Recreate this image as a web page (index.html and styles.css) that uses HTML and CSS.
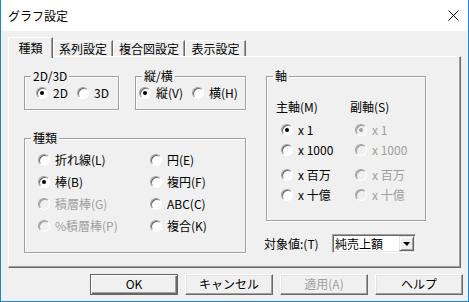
FILE: index.html
```html
<!DOCTYPE html>
<html lang="ja">
<head>
    <meta charset="UTF-8">
    <title>グラフ設定</title>
    <link rel="stylesheet" href="styles.css">
</head>
<body>
    <div class="window">
        <div class="titlebar">
            <span class="title">グラフ設定</span>
            <svg class="close" width="11" height="11" viewBox="0 0 11 11">
                <path d="M0.5 0.5 L10.5 10.5 M10.5 0.5 L0.5 10.5" stroke="#000" stroke-width="1" fill="none"/>
            </svg>
        </div>
        <div class="client">
            <div class="tabs">
                <div class="tab active">種類</div>
                <div class="tab t2">系列設定</div>
                <div class="tab t3">複合図設定</div>
                <div class="tab t4">表示設定</div>
            </div>
            <div class="panel">
                <div class="left">
                    <div class="row-top">
                        <div class="group g-dim">
                            <span class="group-title">2D/3D</span>
                            <div class="radio-row">
                                <label class="item"><span class="radio checked"></span>2D</label>
                                <label class="item"><span class="radio"></span>3D</label>
                            </div>
                        </div>
                        <div class="group g-dir">
                            <span class="group-title">縦/横</span>
                            <div class="radio-row">
                                <label class="item"><span class="radio checked"></span>縦(V)</label>
                                <label class="item"><span class="radio"></span>横(H)</label>
                            </div>
                        </div>
                    </div>
                    <div class="group g-kind">
                        <span class="group-title">種類</span>
                        <div class="kind-grid">
                            <label class="item"><span class="radio"></span>折れ線(L)</label>
                            <label class="item"><span class="radio"></span>円(E)</label>
                            <label class="item"><span class="radio checked"></span>棒(B)</label>
                            <label class="item"><span class="radio"></span>複円(F)</label>
                            <label class="item disabled"><span class="radio"></span>積層棒(G)</label>
                            <label class="item"><span class="radio"></span>ABC(C)</label>
                            <label class="item disabled"><span class="radio"></span>%積層棒(P)</label>
                            <label class="item"><span class="radio"></span>複合(K)</label>
                        </div>
                    </div>
                </div>
                <div class="right">
                    <div class="group g-axis">
                        <span class="group-title">軸</span>
                        <div class="axis-cols">
                            <div class="axis-col">
                                <div class="axis-label">主軸(M)</div>
                                <label class="item tall first"><span class="radio checked"></span>x 1</label>
                                <label class="item tall"><span class="radio"></span>x 1000</label>
                                <label class="item tall sep"><span class="radio"></span>x 百万</label>
                                <label class="item tall"><span class="radio"></span>x 十億</label>
                            </div>
                            <div class="axis-col">
                                <div class="axis-label">副軸(S)</div>
                                <label class="item tall first disabled"><span class="radio checked"></span>x 1</label>
                                <label class="item tall disabled"><span class="radio"></span>x 1000</label>
                                <label class="item tall sep disabled"><span class="radio"></span>x 百万</label>
                                <label class="item tall disabled"><span class="radio"></span>x 十億</label>
                            </div>
                        </div>
                    </div>
                    <div class="target">
                        <span class="target-label">対象値:(T)</span>
                        <div class="select">
                            <span>純売上額</span>
                            <span class="drop"><span class="arrow"></span></span>
                        </div>
                    </div>
                </div>
            </div>
            <div class="buttons">
                <div class="btn default">OK</div>
                <div class="btn">キャンセル</div>
                <div class="btn disabled">適用(A)</div>
                <div class="btn">ヘルプ</div>
            </div>
        </div>
    </div>
</body>
</html>
```
FILE: styles.css
```css
body {
    margin: 0;
    font-family: "Noto Sans CJK JP", "Noto Sans", sans-serif;
    font-size: 12px;
    color: #000;
}
.window {
    width: 469px;
    height: 302px;
    box-sizing: border-box;
    border: 1px solid #1883d7;
    border-top: none;
    display: flex;
    flex-direction: column;
    background: #f0f0f0;
}
.titlebar {
    height: 31px;
    flex: none;
    background: #fff;
    display: flex;
    align-items: center;
    justify-content: space-between;
    padding: 0 9px 0 7px;
}
.title {
    font-size: 12px;
}
.close {
    display: block;
}
.client {
    flex: 1;
    padding: 6px 0 0 7px;
}
.tabs {
    display: flex;
    align-items: flex-end;
    height: 19px;
    position: relative;
    z-index: 1;
}
.tab {
    height: 16px;
    line-height: 15px;
    box-sizing: border-box;
    text-align: center;
    border-top: 1px solid #fff;
    border-left: 1px solid #fff;
    border-right: 1px solid #696969;
    box-shadow: inset -1px 0 0 #a0a0a0;
    background: #f0f0f0;
}
.tab.active {
    width: 45px;
    height: 21px;
    line-height: 20px;
    margin-bottom: -2px;
}
.t2 { width: 60px; }
.t3 { width: 72px; }
.t4 { width: 61px; }
.panel {
    width: 453px;
    height: 212px;
    box-sizing: border-box;
    border: 1px solid #696969;
    border-top-color: #fff;
    border-left-color: #fff;
    box-shadow: inset -1px -1px 0 #a0a0a0;
    padding: 19px 0 0 15px;
    display: grid;
    grid-template-columns: 222px 160px;
    column-gap: 20px;
    align-items: start;
}
.row-top {
    display: flex;
    gap: 16px;
}
.group {
    box-sizing: border-box;
    border: 1px solid #a0a0a0;
    box-shadow: inset 1px 1px 0 #fff, 1px 1px 0 #fff;
}
.group-title {
    display: block;
    width: fit-content;
    height: 14px;
    line-height: 14px;
    margin: -8px 0 0 6px;
    padding: 0 2px;
    background: #f0f0f0;
}
.g-dim {
    width: 95px;
    height: 34px;
}
.g-dir {
    width: 111px;
    height: 34px;
}
.radio-row {
    display: flex;
    margin-top: 3px;
}
.g-dim .radio-row { padding-left: 11px; }
.g-dim .item { width: 42px; }
.g-dir .radio-row { padding-left: 3px; }
.g-dir .item { width: 56px; }
.g-kind {
    width: 222px;
    height: 115px;
    margin-top: 28px;
}
.kind-grid {
    display: grid;
    grid-template-columns: 112px 1fr;
    row-gap: 8px;
    padding: 8px 0 0 13px;
}
.item {
    display: flex;
    align-items: center;
    gap: 5px;
    height: 14px;
    line-height: 14px;
    white-space: nowrap;
}
.item.disabled {
    color: #a0a0a0;
}
.radio {
    width: 12px;
    height: 12px;
    flex: none;
    box-sizing: border-box;
    border-radius: 50%;
    background: #fff;
    border: 1px solid;
    border-color: #a0a0a0 #fff #fff #a0a0a0;
    box-shadow: inset 1px 1px 0 #696969;
    display: flex;
    align-items: center;
    justify-content: center;
}
.radio.checked::after {
    content: "";
    width: 4px;
    height: 4px;
    border-radius: 50%;
    background: #000;
}
.disabled .radio {
    background: #f0f0f0;
    box-shadow: inset 1px 1px 0 #a0a0a0;
}
.disabled .radio.checked::after {
    background: #a0a0a0;
}
.g-axis {
    width: 160px;
    height: 145px;
}
.axis-cols {
    display: grid;
    grid-template-columns: 74px 74px;
    padding-left: 9px;
    margin-top: 17px;
}
.axis-label {
    height: 14px;
    line-height: 14px;
}
.axis-col .item {
    margin-left: 5px;
}
.item.tall {
    height: 20px;
    line-height: 20px;
}
.item.first {
    margin-top: 6px;
}
.item.sep {
    margin-top: 5px;
}
.target {
    display: flex;
    align-items: center;
    height: 19px;
    margin-top: 13px;
}
.target-label {
    width: 68px;
    margin-left: -2px;
}
.select {
    width: 84px;
    height: 19px;
    box-sizing: border-box;
    display: flex;
    align-items: center;
    justify-content: space-between;
    background: #fff;
    border: 1px solid;
    border-color: #a0a0a0 #fff #fff #a0a0a0;
    box-shadow: inset 1px 1px 0 #696969, inset -1px -1px 0 #e3e3e3;
    padding: 0 1px 0 2px;
}
.drop {
    width: 15px;
    height: 15px;
    box-sizing: border-box;
    background: #f0f0f0;
    border: 1px solid;
    border-color: #e3e3e3 #696969 #696969 #e3e3e3;
    box-shadow: inset 1px 1px 0 #fff, inset -1px -1px 0 #a0a0a0;
    display: flex;
    align-items: center;
    justify-content: center;
}
.arrow {
    width: 0;
    height: 0;
    border-left: 4px solid transparent;
    border-right: 3px solid transparent;
    border-top: 4px solid #000;
}
.buttons {
    display: flex;
    justify-content: flex-end;
    gap: 7px;
    margin-top: 6px;
    padding-right: 5px;
}
.btn {
    width: 88px;
    height: 21px;
    box-sizing: border-box;
    text-align: center;
    line-height: 18px;
    border: 1px solid;
    border-color: #fff #696969 #696969 #fff;
    box-shadow: inset -1px -1px 0 #a0a0a0, inset 1px 1px 0 #e3e3e3;
}
.btn.default {
    border-color: #646464;
    box-shadow: inset 1px 1px 0 #fff, inset -1px -1px 0 #696969, inset -2px -2px 0 #a0a0a0;
}
.btn.disabled {
    color: #a0a0a0;
}
```
